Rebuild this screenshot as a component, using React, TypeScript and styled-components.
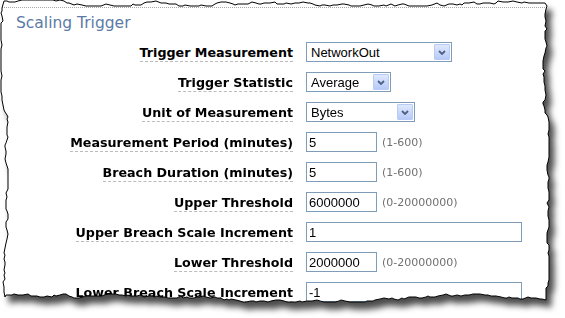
import styled, { createGlobalStyle } from "styled-components";

const GlobalStyle = createGlobalStyle`
  html, body {
    margin: 0;
    padding: 0;
    background: #fff;
  }
`;

// torn paper outline, generated once with a fixed seed
const buildTornPath = () => {
  let seed = 11;
  const rnd = () => {
    seed = (seed * 16807) % 2147483647;
    return seed / 2147483647;
  };
  const walk = (v: number, lo: number, hi: number) =>
    Math.min(hi, Math.max(lo, v + (rnd() - 0.5) * 3.2));
  const step = () => 2 + Math.floor(rnd() * 4);
  const pts: [number, number][] = [];

  let v = 3;
  for (let x = 4; x < 546; x += step()) {
    v = walk(v, 0, 6);
    pts.push([x, Math.round(v)]);
  }
  v = 546;
  for (let y = 6; y < 298; y += step()) {
    v = walk(v, 543, 549);
    pts.push([Math.round(v), y]);
  }
  v = 299;
  for (let x = 546; x > 5; x -= step()) {
    v = walk(v, 294, 302);
    pts.push([x, Math.round(v)]);
  }
  v = 4;
  for (let y = 297; y > 6; y -= step()) {
    v = walk(v, 1, 8);
    pts.push([Math.round(v), y]);
  }
  return "M" + pts.map((p) => p.join(" ")).join(" L") + " Z";
};

const TORN = buildTornPath();

const Page = styled.div`
  position: relative;
  width: 565px;
  height: 318px;
  filter: drop-shadow(5px 7px 3px rgba(0, 0, 0, 0.7));
`;

const Sheet = styled.div`
  width: 100%;
  height: 100%;
  box-sizing: border-box;
  padding-top: 7px;
  background: #fff;
  clip-path: path("${TORN}");
`;

const Outline = styled.svg`
  position: absolute;
  inset: 0;
  pointer-events: none;
`;

const Panel = styled.section`
  border-top: 1px dotted #a8a8a8;
`;

const Title = styled.h2`
  margin: 6px 0 0 16px;
  font: normal 15.5px/18px "DejaVu Sans", Verdana, sans-serif;
  color: #5b7ba6;
`;

const Form = styled.div`
  margin-top: 5px;
`;

const Row = styled.div`
  display: grid;
  grid-template-columns: 293px 1fr;
  column-gap: 13px;
  height: 30px;
  align-items: center;
`;

const LabelCell = styled.div`
  text-align: right;
`;

const Label = styled.span`
  font: bold 12.7px/15px "DejaVu Sans", Verdana, sans-serif;
  color: #000;
  border-bottom: 1px dashed #bbb;
  padding-bottom: 1px;
`;

const Control = styled.div`
  display: flex;
  align-items: center;
`;

const Field = styled.input<{ $w: number }>`
  width: ${(p) => p.$w}px;
  height: 20px;
  box-sizing: border-box;
  margin: 0;
  padding: 0 2px;
  border: 1px solid #7f9db9;
  background: #fff;
  font: 13px "Liberation Sans", Arial, sans-serif;
  color: #000;
  outline: none;
`;

const Hint = styled.span`
  margin-left: 5px;
  font: 11px "DejaVu Sans", Verdana, sans-serif;
  color: #707070;
`;

const SelectBox = styled.div<{ $w: number }>`
  width: ${(p) => p.$w}px;
  height: 20px;
  box-sizing: border-box;
  display: flex;
  align-items: center;
  justify-content: space-between;
  padding: 1px 1px 1px 4px;
  border: 1px solid #7f9db9;
  background: #fff;
`;

const SelectText = styled.span`
  font: 13px "Liberation Sans", Arial, sans-serif;
  color: #000;
`;

const DropButton = styled.span`
  width: 16px;
  height: 16px;
  box-sizing: border-box;
  display: flex;
  align-items: center;
  justify-content: center;
  border: 1px solid #b8cbf6;
  border-radius: 1px;
  background: linear-gradient(#dfe8fd, #b7caf7);
`;

type FieldRow =
  | { label: string; kind: "select"; value: string; width: number }
  | { label: string; kind: "input"; value: string; width: number; hint?: string };

const rows: FieldRow[] = [
  { label: "Trigger Measurement", kind: "select", value: "NetworkOut", width: 146 },
  { label: "Trigger Statistic", kind: "select", value: "Average", width: 85 },
  { label: "Unit of Measurement", kind: "select", value: "Bytes", width: 109 },
  { label: "Measurement Period (minutes)", kind: "input", value: "5", width: 71, hint: "(1-600)" },
  { label: "Breach Duration (minutes)", kind: "input", value: "5", width: 71, hint: "(1-600)" },
  { label: "Upper Threshold", kind: "input", value: "6000000", width: 71, hint: "(0-20000000)" },
  { label: "Upper Breach Scale Increment", kind: "input", value: "1", width: 216 },
  { label: "Lower Threshold", kind: "input", value: "2000000", width: 71, hint: "(0-20000000)" },
  { label: "Lower Breach Scale Increment", kind: "input", value: "-1", width: 216 },
];

const Chevron = () => (
  <svg width="8" height="5" viewBox="0 0 8 5">
    <polyline points="1,1 4,4 7,1" fill="none" stroke="#4d6185" strokeWidth="1.8" />
  </svg>
);

const App = () => {
  return (
    <Page>
      <GlobalStyle />
      <Sheet>
        <Panel>
          <Title>Scaling Trigger</Title>
          <Form>
            {rows.map((row) => (
              <Row key={row.label}>
                <LabelCell>
                  <Label>{row.label}</Label>
                </LabelCell>
                <Control>
                  {row.kind === "select" ? (
                    <SelectBox $w={row.width}>
                      <SelectText>{row.value}</SelectText>
                      <DropButton>
                        <Chevron />
                      </DropButton>
                    </SelectBox>
                  ) : (
                    <>
                      <Field $w={row.width} defaultValue={row.value} />
                      {row.hint && <Hint>{row.hint}</Hint>}
                    </>
                  )}
                </Control>
              </Row>
            ))}
          </Form>
        </Panel>
      </Sheet>
      <Outline width="565" height="318" viewBox="0 0 565 318">
        <path d={TORN} fill="none" stroke="#000" strokeWidth="1" />
      </Outline>
    </Page>
  );
};

export default App;
